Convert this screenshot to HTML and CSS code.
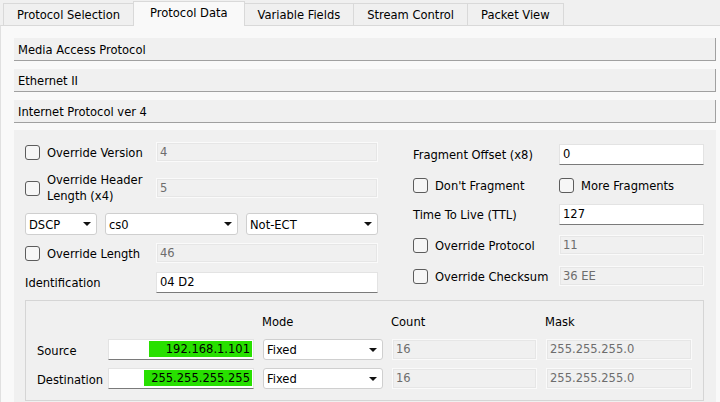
FILE: index.html
```html
<!DOCTYPE html>
<html>
<head>
<meta charset="utf-8">
<link rel="stylesheet" href="styles.css">
</head>
<body>
<div class="tabs">
  <div class="tab">Protocol Selection</div>
  <div class="tab active">Protocol Data</div>
  <div class="tab">Variable Fields</div>
  <div class="tab">Stream Control</div>
  <div class="tab">Packet View</div>
</div>
<div class="pane">
  <div class="section">Media Access Protocol</div>
  <div class="section">Ethernet II</div>
  <div class="section">Internet Protocol ver 4</div>
  <div class="content">
    <div class="columns">
      <div class="left">
        <div class="row lr1">
          <label class="check"><span class="box"></span><span>Override Version</span></label>
          <div class="field disabled">4</div>
        </div>
        <div class="row lr2">
          <label class="check"><span class="box"></span><span class="two">Override Header<br>Length (x4)</span></label>
          <div class="field disabled">5</div>
        </div>
        <div class="selects lr3">
          <div class="select s-dscp"><span>DSCP</span><span class="arrow"></span></div>
          <div class="select s-cs"><span>cs0</span><span class="arrow"></span></div>
          <div class="select s-ecn"><span>Not-ECT</span><span class="arrow"></span></div>
        </div>
        <div class="row lr4">
          <label class="check"><span class="box"></span><span>Override Length</span></label>
          <div class="field disabled">46</div>
        </div>
        <div class="row lr5">
          <span class="lbl">Identification</span>
          <div class="field edit">04 D2</div>
        </div>
      </div>
      <div class="right">
        <div class="row rr1">
          <span class="lbl">Fragment Offset (x8)</span>
          <div class="field edit">0</div>
        </div>
        <div class="row rr2">
          <label class="check"><span class="box"></span><span>Don't Fragment</span></label>
          <label class="check"><span class="box"></span><span>More Fragments</span></label>
        </div>
        <div class="row rr3">
          <span class="lbl">Time To Live (TTL)</span>
          <div class="field edit">127</div>
        </div>
        <div class="row rr4">
          <label class="check"><span class="box"></span><span>Override Protocol</span></label>
          <div class="field disabled">11</div>
        </div>
        <div class="row rr5">
          <label class="check"><span class="box"></span><span>Override Checksum</span></label>
          <div class="field disabled">36 EE</div>
        </div>
      </div>
    </div>
    <div class="group">
      <div class="addr-grid">
        <span></span>
        <span></span>
        <span class="head">Mode</span>
        <span class="head">Count</span>
        <span class="head">Mask</span>

        <span class="lbl">Source</span>
        <div class="field edit addr"><span class="hl hl-src">192.168.1.101</span></div>
        <div class="select"><span>Fixed</span><span class="arrow"></span></div>
        <div class="field disabled">16</div>
        <div class="field disabled">255.255.255.0</div>

        <span class="lbl">Destination</span>
        <div class="field edit addr"><span class="hl hl-dst">255.255.255.255</span></div>
        <div class="select"><span>Fixed</span><span class="arrow"></span></div>
        <div class="field disabled">16</div>
        <div class="field disabled">255.255.255.0</div>
      </div>
    </div>
  </div>
</div>
</body>
</html>
```
FILE: styles.css
```css
html, body {
  margin: 0;
  padding: 0;
}
body {
  width: 720px;
  height: 402px;
  overflow: hidden;
  background: #f0f0f0;
  font-family: "DejaVu Sans Condensed", "DejaVu Sans", sans-serif;
  font-stretch: condensed;
  font-size: 12.8px;
  color: #000;
}

/* tabs */
.tabs {
  display: flex;
  align-items: flex-end;
  height: 25px;
  padding-left: 3px;
  box-sizing: border-box;
  background: #f0f0f0;
}
.tab {
  height: 21px;
  line-height: 21px;
  padding: 0 13px;
  border: 1px solid #d9d9d9;
  border-bottom: none;
  margin-right: -1px;
  background: #f0f0f0;
  white-space: nowrap;
}
.tab.active {
  height: 24px;
  line-height: 22px;
  padding: 0 16px;
  background: #f9f9f9;
  margin-bottom: -1px;
  position: relative;
  z-index: 1;
}

/* pane */
.pane {
  background: #f9f9f9;
  border-top: 1px solid #d9d9d9;
  border-left: 1px solid #e0e0e0;
  padding: 12px 4px 0 13px;
  height: 364px;
}
.section {
  height: 22px;
  line-height: 23px;
  padding-left: 4px;
  background: #f0f0f0;
  border-right: 1px solid #a0a0a0;
  border-bottom: 1px solid #a0a0a0;
  margin-bottom: 8px;
}
.section:nth-child(3) {
  margin-bottom: 7px;
}

/* content area */
.content {
  background: #f0f0f0;
  padding: 12px 12px 0 11px;
  height: 260px;
}
.columns {
  display: flex;
  gap: 35px;
}
.left {
  width: 353px;
}
.right {
  width: 291px;
  padding-top: 2px;
}
.row {
  display: grid;
  align-items: center;
}
.left .row {
  grid-template-columns: 131px 222px;
}
.right .row {
  grid-template-columns: 146px 145px;
}
.lr1 { height: 20px; }
.lr2 { height: 36px; margin-top: 8px; }
.lr3 { height: 22px; margin-top: 7px; }
.lr4 { height: 20px; margin-top: 8px; }
.lr5 { height: 21px; margin-top: 9px; }
.rr1 { height: 20px; }
.rr2 { height: 20px; margin-top: 11px; }
.rr3 { height: 20px; margin-top: 9px; }
.rr4 { height: 20px; margin-top: 11px; }
.rr5 { height: 20px; margin-top: 11px; }

.check {
  display: flex;
  align-items: center;
  gap: 7px;
  white-space: nowrap;
}
.box {
  width: 13px;
  height: 13px;
  flex: none;
  border: 1px solid #5c5c5c;
  border-radius: 3px;
  background: #f6f6f6;
}
.two {
  line-height: 16px;
  margin-top: -1px;
}
.lbl {
  white-space: nowrap;
}

/* fields */
.field {
  box-sizing: border-box;
  height: 20px;
  line-height: 18px;
  padding: 0 3px;
  white-space: nowrap;
  overflow: hidden;
}
.field.disabled {
  background: #f0f0f0;
  border: 1px solid #fafafa;
  color: #6d6d6d;
  box-shadow: inset 0 0 0 1px #e6e6e6;
}
.field.edit {
  background: #fff;
  border: 1px solid #e3e3e3;
  border-bottom: 1px solid #7a7a7a;
  height: 21px;
}

/* selects */
.selects {
  display: flex;
  gap: 8px;
}
.select {
  box-sizing: border-box;
  height: 22px;
  display: flex;
  align-items: center;
  justify-content: space-between;
  padding: 0 5px 0 3px;
  background: #fff;
  border: 1px solid #cfcfcf;
  border-radius: 3px;
  white-space: nowrap;
}
.s-dscp { width: 72px; }
.s-cs { width: 133px; }
.s-ecn { flex: 1; }
.arrow {
  width: 0;
  height: 0;
  border-left: 4px solid transparent;
  border-right: 4px solid transparent;
  border-top: 4px solid #111;
}

/* address group */
.group {
  margin-top: 7px;
  width: 679px;
  box-sizing: border-box;
  border: 1px solid #d5d5d5;
  padding: 13px 11px 10px 11px;
  height: 101px;
}
.addr-grid {
  display: grid;
  grid-template-columns: 62px 146px 120px 145px 146px;
  grid-template-rows: 17px 21px 21px;
  column-gap: 9px;
  row-gap: 8px;
  align-items: center;
}
.head {
  margin-left: -1px;
  align-self: start;
}
.addr-grid .lbl {
  margin-top: 2px;
}
.addr-grid .field,
.addr-grid .select {
  height: 21px;
}
.field.addr {
  text-align: right;
  padding-right: 1px;
  line-height: 16px;
}
.hl {
  display: inline-block;
  background: #28e000;
  height: 16px;
  line-height: 16px;
  padding-right: 2px;
  margin-top: 1px;
}
.hl-src { padding-left: 17px; }
.hl-dst { padding-left: 7px; }
```
